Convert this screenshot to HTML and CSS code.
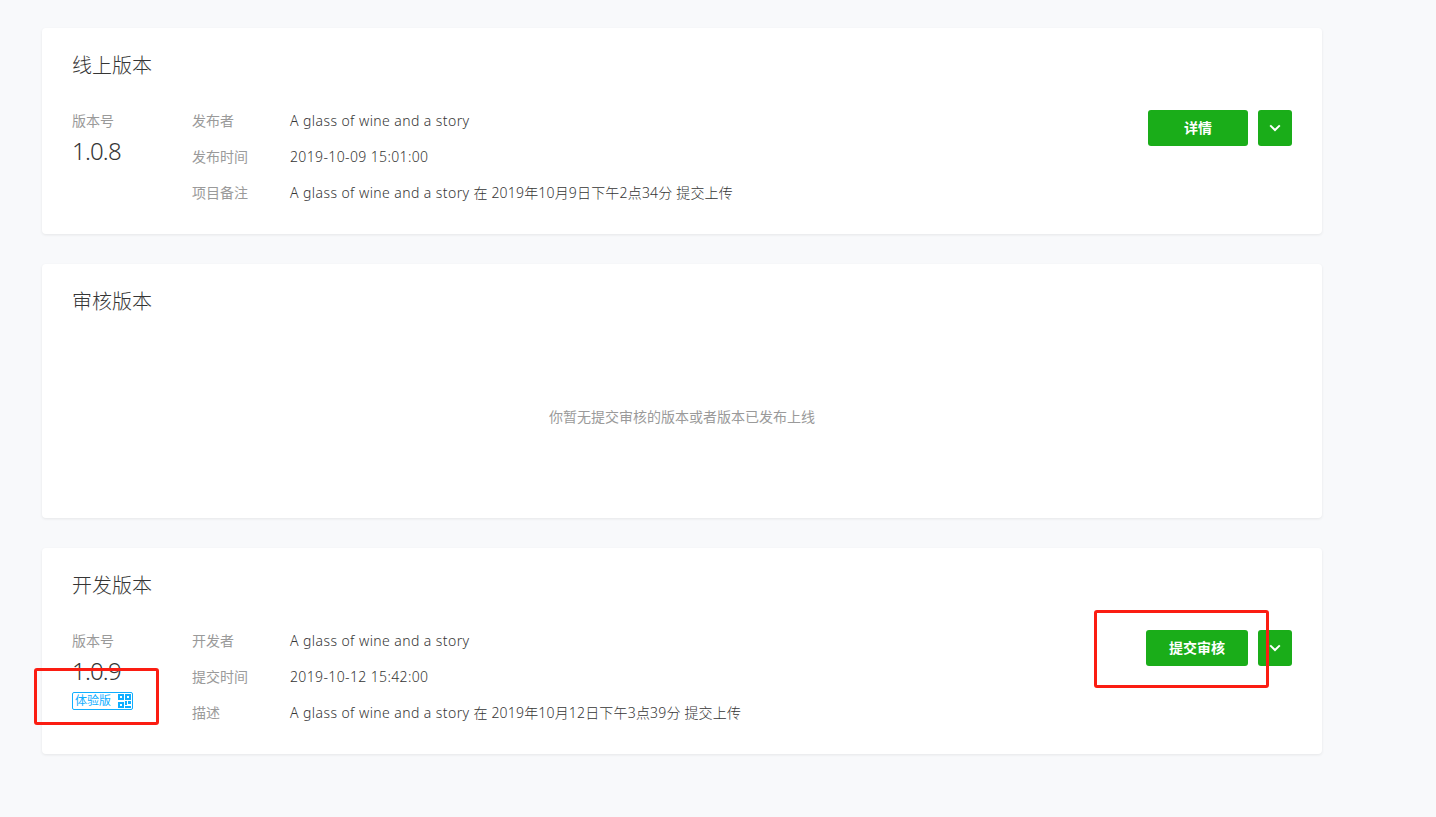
FILE: index.html
```html
<!DOCTYPE html>
<html lang="zh-CN">
<head>
    <meta charset="UTF-8">
    <title>版本管理</title>
    <link rel="stylesheet" href="styles.css">
</head>
<body>
    <div class="page">
        <!-- 线上版本 -->
        <section class="card">
            <h2 class="card-title">线上版本</h2>
            <div class="version">
                <div class="version-no">
                    <div class="label">版本号</div>
                    <div class="number">1.0.8</div>
                </div>
                <div class="info">
                    <div class="row"><span class="label row-label">发布者</span><span class="value"><span class="name">A glass of wine and a story</span></span></div>
                    <div class="row"><span class="label row-label">发布时间</span><span class="value date">2019-10-09 15:01:00</span></div>
                    <div class="row"><span class="label row-label">项目备注</span><span class="value"><span class="name">A glass of wine and a story</span> 在 2019年10月9日下午2点34分 提交上传</span></div>
                </div>
                <div class="actions">
                    <button class="btn btn-main">详情</button>
                    <button class="btn btn-more">
                        <svg width="12" height="8" viewBox="0 0 12 8"><path d="M1.200 1.400 6 6 10.800 1.400" fill="none" stroke="#fff" stroke-width="2"/></svg>
                    </button>
                </div>
            </div>
        </section>

        <!-- 审核版本 -->
        <section class="card">
            <h2 class="card-title">审核版本</h2>
            <p class="empty">你暂无提交审核的版本或者版本已发布上线</p>
        </section>

        <!-- 开发版本 -->
        <section class="card">
            <h2 class="card-title">开发版本</h2>
            <div class="version">
                <div class="version-no">
                    <div class="label">版本号</div>
                    <div class="number">1.0.9</div>
                    <div class="tag">
                        <span>体验版</span>
                        <svg width="13" height="14" viewBox="0 0 13 14" fill="#10aeff">
                            <path d="M0 0h6v6H0zM2 2v2h2V2zM7 0h6v6H7zM9 2v2h2V2zM0 8h6v6H0zM2 10v2h2v-2z" fill-rule="evenodd"/>
                            <path d="M7 7h2v4H7zM10 7h3v3h-3zM7 12h6v2H7z"/>
                        </svg>
                    </div>
                </div>
                <div class="info">
                    <div class="row"><span class="label row-label">开发者</span><span class="value"><span class="name">A glass of wine and a story</span></span></div>
                    <div class="row"><span class="label row-label">提交时间</span><span class="value date">2019-10-12 15:42:00</span></div>
                    <div class="row"><span class="label row-label">描述</span><span class="value"><span class="name">A glass of wine and a story</span> 在 2019年10月12日下午3点39分 提交上传</span></div>
                </div>
                <div class="actions">
                    <button class="btn btn-main btn-submit">提交审核</button>
                    <button class="btn btn-more">
                        <svg width="12" height="8" viewBox="0 0 12 8"><path d="M1.200 1.400 6 6 10.800 1.400" fill="none" stroke="#fff" stroke-width="2"/></svg>
                    </button>
                </div>
            </div>
        </section>
    </div>

    <!-- 截图上的红框标注 -->
    <div class="mark mark-tag"></div>
    <div class="mark mark-submit"></div>
</body>
</html>
```

FILE: styles.css
```css
* {
    box-sizing: border-box;
    margin: 0;
    padding: 0;
}

body {
    background-color: #f8f9fb;
    color: #353535;
    font-family: "Noto Sans", "Noto Sans CJK SC", sans-serif;
    font-size: 14px;
    height: 817px;
    overflow: hidden;
    position: relative;
}

.page {
    width: 1280px;
    margin-left: 42px;
    padding-top: 28px;
    display: flex;
    flex-direction: column;
    gap: 30px;
}

.card {
    background: #fff;
    border-radius: 4px;
    box-shadow: 0 1px 3px rgba(0, 0, 0, 0.08);
    padding: 24px 30px 0;
    height: 206px;
}

.card:nth-child(2) {
    height: 254px;
}

.card-title {
    font-size: 20px;
    font-weight: 300;
    line-height: 28px;
    color: #353535;
}

.version {
    display: flex;
    margin-top: 28px;
}

.version-no {
    width: 120px;
}

.label {
    color: #9a9a9a;
    line-height: 26px;
}

.number {
    font-size: 24px;
    font-weight: 300;
    letter-spacing: -0.8px;
    line-height: 34px;
}

.tag {
    width: 61px;
    height: 18px;
    margin-top: 4px;
    border: 1px solid #10aeff;
    border-radius: 2px;
    color: #10aeff;
    font-size: 12px;
    line-height: 16px;
    display: flex;
    align-items: center;
    justify-content: space-between;
    padding: 0 1px 0 2px;
}

.info {
    flex: 1;
    display: flex;
    flex-direction: column;
    gap: 10px;
}

.row {
    display: flex;
    line-height: 26px;
}

.row-label {
    width: 98px;
}

.value {
    font-weight: 300;
    letter-spacing: 0.18px;
}

.name {
    letter-spacing: 0.42px;
}

.date {
    letter-spacing: 0.37px;
}

.actions {
    display: flex;
    gap: 10px;
    margin-top: 2px;
}

.btn {
    height: 36px;
    background: #1aad19;
    border: none;
    border-radius: 3px;
    color: #fff;
    font-family: inherit;
    font-size: 14px;
    font-weight: 700;
    padding-bottom: 2px;
}

.btn-main {
    width: 100px;
}

.btn-submit {
    width: 102px;
}

.btn-more {
    width: 34px;
    padding-bottom: 0;
    display: flex;
    align-items: center;
    justify-content: center;
}

.empty {
    color: #9a9a9a;
    text-align: center;
    line-height: 20px;
    margin-top: 91px;
}

.mark {
    position: absolute;
    border: 3px solid #fb1d12;
    border-radius: 3px;
}

.mark-tag {
    left: 34px;
    top: 668px;
    width: 125px;
    height: 57px;
}

.mark-submit {
    left: 1094px;
    top: 610px;
    width: 175px;
    height: 78px;
}
```
